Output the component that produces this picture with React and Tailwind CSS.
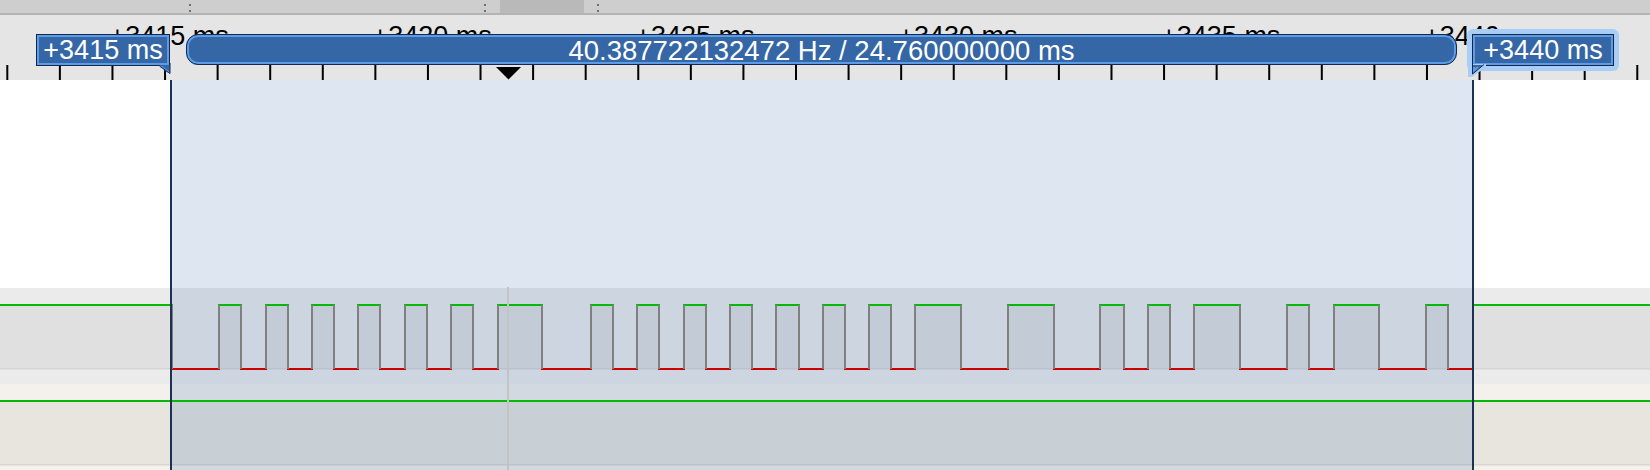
import React from "react";

const TICKS = Array.from({ length: 32 }, (_, k) => 7.3 + k * 52.58);

const RULER_LABELS = [
  [2, "+3415 ms"],
  [7, "+3420 ms"],
  [12, "+3425 ms"],
  [17, "+3430 ms"],
  [22, "+3435 ms"],
  [27, "+3440 ms"],
];

// edge positions of channel 1, starting high
const EDGES = [
  171, 218, 240, 265, 287, 311, 333, 357, 379, 404, 426, 450, 472, 497, 541,
  590, 612, 636, 658, 683, 705, 729, 751, 775, 798, 822, 844, 868, 890, 914,
  960, 1007, 1053, 1099, 1123, 1147, 1169, 1193, 1239, 1286, 1308, 1333, 1378,
  1425, 1447, 1472,
];

function buildSegments(edges, startHigh, end) {
  const segs = [];
  let x = 0;
  let high = startHigh;
  for (const e of edges) {
    segs.push({ x0: x, x1: e, high });
    x = e;
    high = !high;
  }
  segs.push({ x0: x, x1: end, high });
  return segs;
}

const SEGS = buildSegments(EDGES, true, 1650);

function Grip() {
  return (
    <div className="flex w-[2px] flex-col gap-[4px] pt-[4px]">
      <span className="block h-[2px] w-[2px] bg-[#6f6f6f]" />
      <span className="block h-[2px] w-[2px] bg-[#6f6f6f]" />
    </div>
  );
}

function ScrollBand() {
  return (
    <div className="flex h-[15px] border-b-2 border-[#b4b4b4] bg-[#cecece]">
      <div className="w-[189px]" />
      <Grip />
      <div className="w-[293px]" />
      <Grip />
      <div className="w-[14px]" />
      <div className="w-[84px] bg-[#b9b9b9]" />
      <div className="w-[13px]" />
      <Grip />
    </div>
  );
}

function Ruler() {
  return (
    <div className="relative h-[65px] bg-[#e5e5e5]">
      {RULER_LABELS.map(([k, label]) => (
        <span
          key={label}
          className="absolute top-[8px] text-[27px] leading-[27px] whitespace-nowrap text-black"
          style={{ left: TICKS[k] - 3 }}
        >
          {label}
        </span>
      ))}

      <svg className="absolute left-0 top-0" width="1650" height="65">
        {TICKS.map((x, i) => (
          <rect key={i} x={x - 1} y={50} width={2} height={15} fill="#000" />
        ))}
        <polygon points="496,52 521,52 508.5,64.5" fill="#000" />
      </svg>

      {/* left time marker */}
      <div className="absolute left-[36px] top-[19px] flex h-[32px] w-[134px] items-center justify-center border border-[#14284a] bg-[#3566a6] shadow-[inset_0_0_0_2px_#5b9ce8]">
        <span className="text-[27px] leading-none text-white">+3415 ms</span>
      </div>
      <svg className="absolute left-[159px] top-[48px]" width="12" height="11">
        <path d="M0 2 L11 10 L11 2 Z" fill="#3566a6" />
        <path d="M2 3.5 L9.5 9" stroke="#5b9ce8" strokeWidth="2" fill="none" />
        <path d="M0.5 3 L11 10.5 L11 0" stroke="#14284a" strokeWidth="1" fill="none" />
      </svg>

      {/* measurement bar */}
      <div className="absolute left-[186px] top-[19px] flex h-[31px] w-[1271px] items-center justify-center rounded-[12px] border border-[#14284a] bg-[#3566a6] pt-[2px] shadow-[inset_0_0_0_2px_#5b9ce8]">
        <span className="text-[27.5px] leading-none whitespace-nowrap text-white">
          40.387722132472 Hz / 24.760000000 ms
        </span>
      </div>

      {/* right time marker (selected) */}
      <div className="absolute left-[1467px] top-[14px] rounded-[6px] bg-[#a9cdf5] p-[5px]">
        <div className="flex h-[32px] w-[142px] items-center justify-center border border-[#14284a] bg-[#3566a6] shadow-[inset_0_0_0_2px_#5b9ce8]">
          <span className="text-[27px] leading-none text-white">+3440 ms</span>
        </div>
      </div>
      <svg className="absolute left-[1467px] top-[49px]" width="20" height="14">
        <path d="M1 0 L1 13 L5 13 L19 3 L19 0 Z" fill="#a9cdf5" />
        <path d="M5.5 1 L5.5 9.5 L16 1 Z" fill="#3566a6" />
        <path d="M7 3 L7 6.5 L11 3" stroke="#5b9ce8" strokeWidth="2" fill="none" />
        <path d="M5.5 0 L5.5 10 L17 0.5" stroke="#14284a" strokeWidth="1" fill="none" />
      </svg>
    </div>
  );
}

function PulseChannel() {
  return (
    <div className="relative h-[96px] bg-[#ebebeb]">
      <svg className="absolute left-0 top-0" width="1650" height="96">
        <rect x="0" y="80" width="1650" height="1.5" fill="#d5d5d5" />
        {SEGS.filter((s) => s.high).map((s, i) => (
          <rect key={i} x={s.x0} y={18} width={s.x1 - s.x0} height={62} fill="#e0e0e0" />
        ))}
      </svg>
      <svg className="absolute left-0 top-0 z-20" width="1650" height="96">
        {SEGS.map((s, i) =>
          s.high ? (
            <rect key={"h" + i} x={s.x0} y={16} width={s.x1 - s.x0 + 2} height={2} fill="#06b906" />
          ) : (
            <rect key={"l" + i} x={s.x0} y={80} width={s.x1 - s.x0 + 2} height={2} fill="#c80000" />
          )
        )}
        {EDGES.map((x, i) => (
          <rect key={"e" + i} x={x} y={17} width={2} height={64} fill="#808080" />
        ))}
      </svg>
    </div>
  );
}

function SteadyChannel() {
  return (
    <div className="relative h-[86px] bg-[#f4f0eb]">
      <svg className="absolute left-0 top-0" width="1650" height="86">
        <rect x="0" y="18" width="1650" height="62" fill="#e8e5df" />
        <rect x="0" y="80" width="1650" height="1.5" fill="#dad6cf" />
      </svg>
      <svg className="absolute left-0 top-0 z-20" width="1650" height="86">
        <rect x="0" y="16" width="1650" height="2" fill="#06b906" />
      </svg>
    </div>
  );
}

export default function App() {
  return (
    <div className="relative h-[470px] w-[1650px] overflow-hidden bg-white font-['Liberation_Sans',Arial,sans-serif]">
      <ScrollBand />
      <Ruler />
      <div className="h-[208px] bg-white" />
      <PulseChannel />
      <SteadyChannel />

      {/* selection tint */}
      <div className="absolute bottom-0 left-[170px] top-[80px] z-10 w-[1304px] bg-[#1c58a2]/[0.15]" />
      {/* cursor */}
      <div className="absolute bottom-0 left-[507px] top-[287px] z-30 w-[2px] bg-[#c3c3c3]" />
      {/* selection edges */}
      <div className="absolute bottom-0 left-[170px] top-[80px] z-40 w-[2px] bg-[#1d3152]" />
      <div className="absolute bottom-0 left-[1472px] top-[80px] z-40 w-[2px] bg-[#1d3152]" />
    </div>
  );
}
